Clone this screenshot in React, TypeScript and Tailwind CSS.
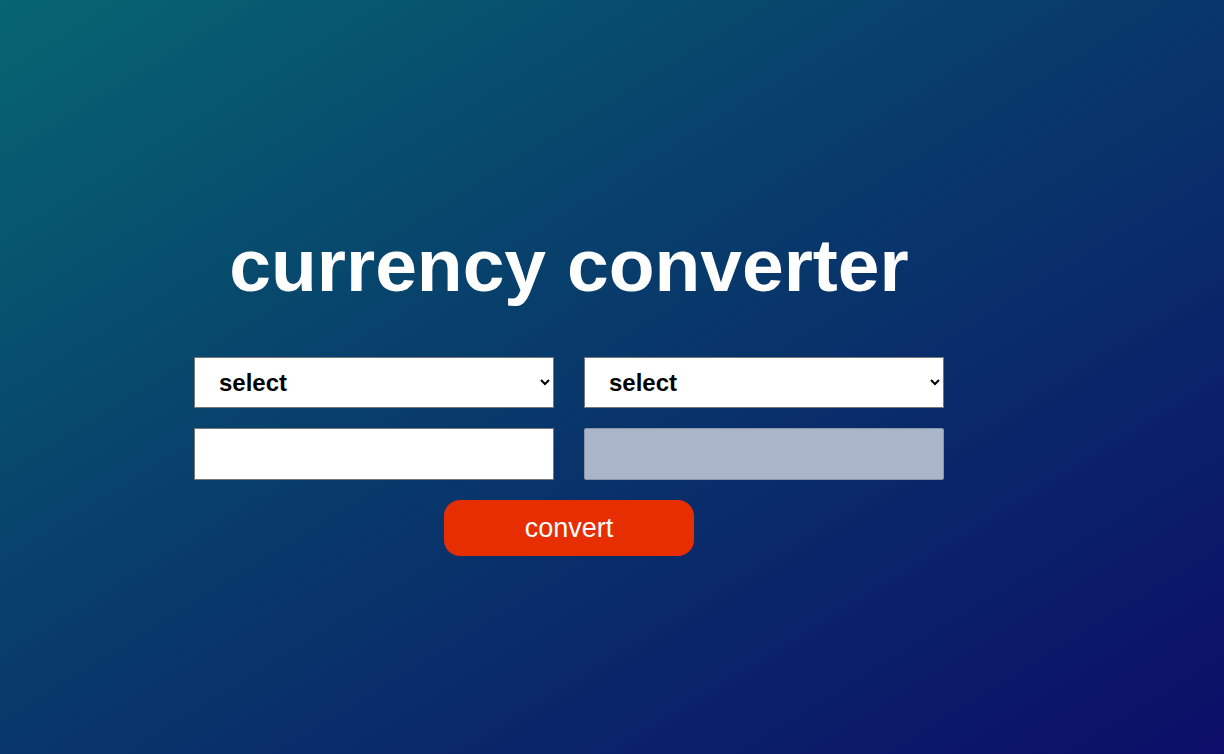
import { useState } from "react"

const currencies = ["USD", "EUR", "GBP", "INR", "JPY", "AUD", "CAD"]

export default function App() {
  const [from, setFrom] = useState("")
  const [to, setTo] = useState("")
  const [amount, setAmount] = useState("")

  return (
    <div
      className="min-h-[754px] w-full bg-[linear-gradient(to_bottom_right,#066571,#083b6b_45%,#0c0d68)] font-['Liberation_Sans',Arial,sans-serif]"
    >
      <div className="ml-[194px] flex w-[750px] flex-col items-center pt-[223px]">
        {/* Title */}
        <h1 className="text-[75px] font-bold leading-[84px] text-white">currency converter</h1>

        {/* Currency pickers */}
        <div className="mt-[50px] grid w-full grid-cols-2 gap-x-[30px] gap-y-[20px]">
          <select
            value={from}
            onChange={(e) => setFrom(e.target.value)}
            className="h-[51px] border border-[#767676] bg-white pl-[20px] pr-1 text-[24px] font-bold text-black"
          >
            <option value="">select</option>
            {currencies.map((c) => (
              <option key={c} value={c}>
                {c}
              </option>
            ))}
          </select>
          <select
            value={to}
            onChange={(e) => setTo(e.target.value)}
            className="h-[51px] border border-[#767676] bg-white pl-[20px] pr-1 text-[24px] font-bold text-black"
          >
            <option value="">select</option>
            {currencies.map((c) => (
              <option key={c} value={c}>
                {c}
              </option>
            ))}
          </select>

          <input
            value={amount}
            onChange={(e) => setAmount(e.target.value)}
            className="h-[52px] border border-[#767676] bg-white px-3 text-[22px] text-black"
          />
          <input
            disabled
            className="h-[52px] rounded-[2px] border border-[#8a95a8] bg-[#a9b5c8] px-3 text-[22px] text-black"
          />
        </div>

        {/* Convert button */}
        <button className="mt-[20px] h-[56px] w-[250px] rounded-[16px] bg-[#e62e00] text-[27px] text-white">
          convert
        </button>
      </div>
    </div>
  )
}
